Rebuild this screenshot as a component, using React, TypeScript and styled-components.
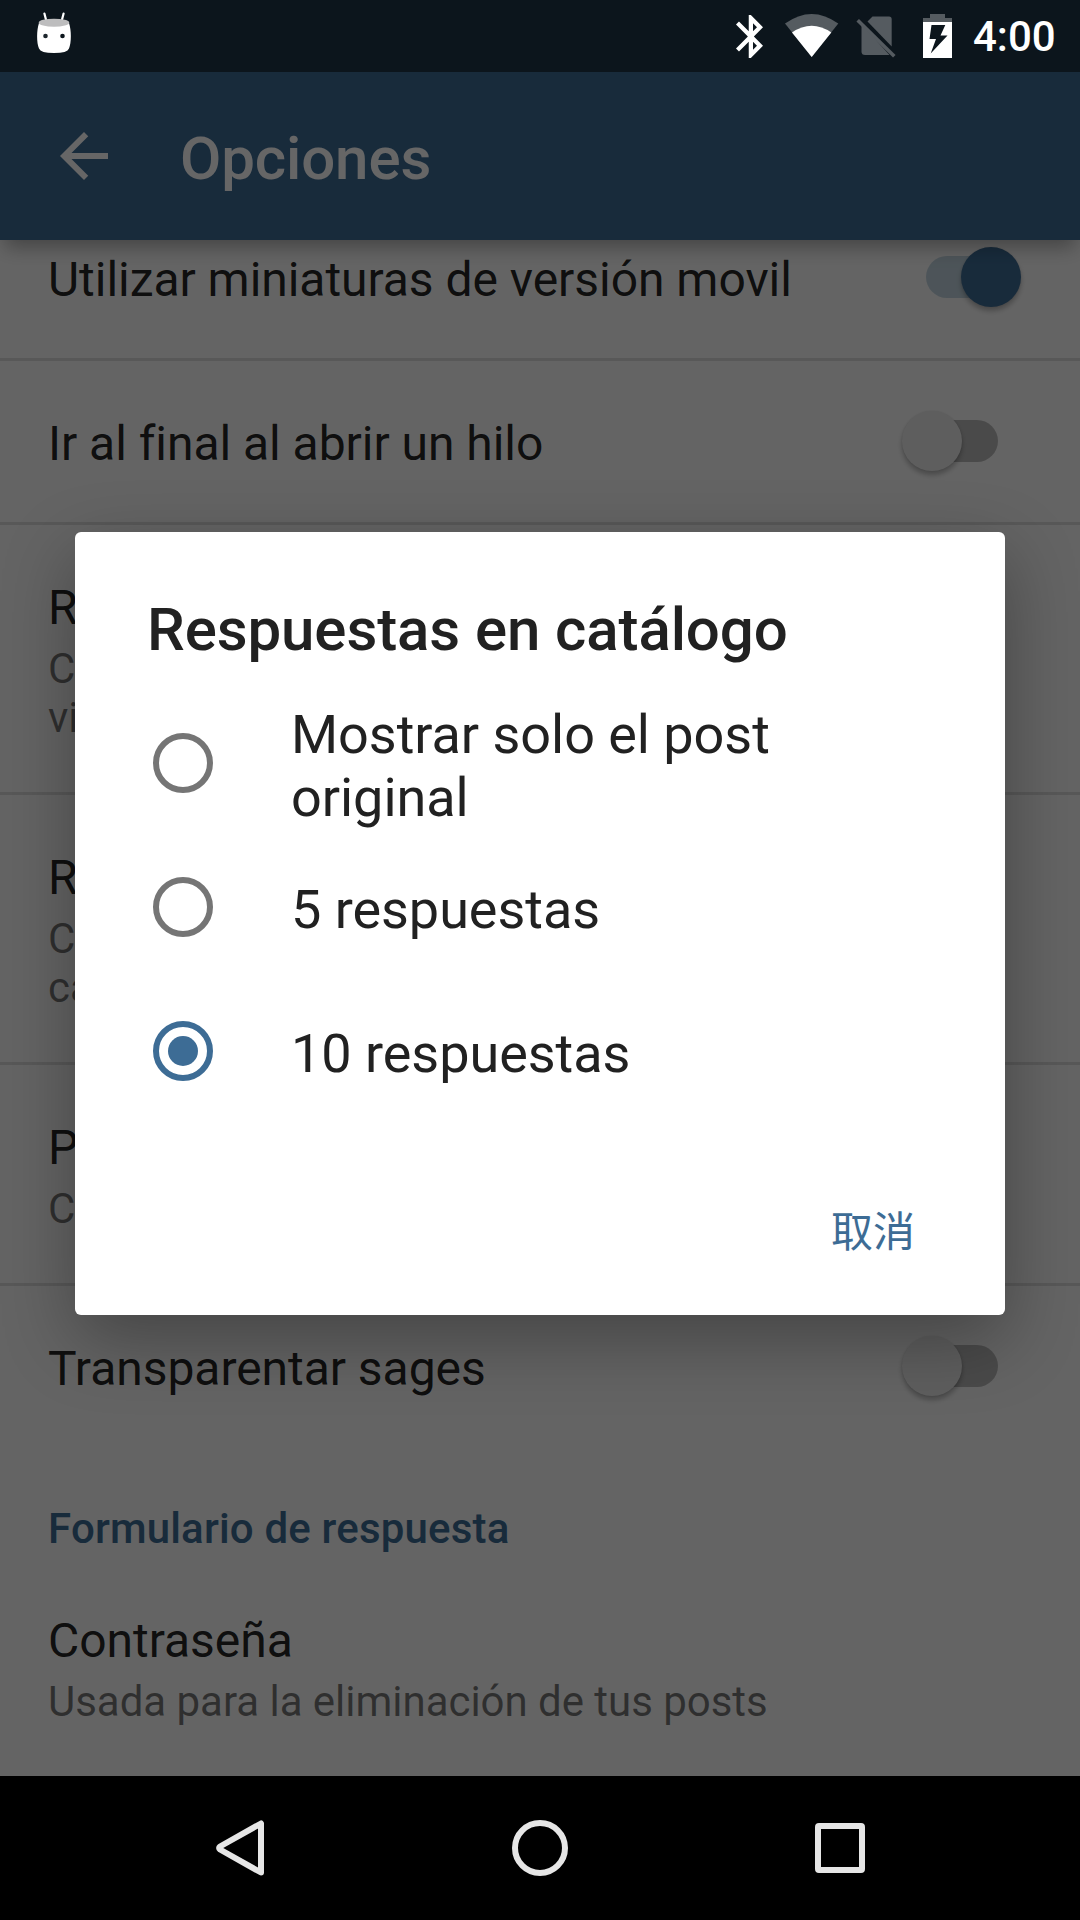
import React from "react";
import styled, { createGlobalStyle } from "styled-components";

const ACCENT = "#3d6c95";

const GlobalStyle = createGlobalStyle`
  *, *::before, *::after { box-sizing: border-box; }
  html, body { margin: 0; padding: 0; }
  body { font-family: Roboto, "Noto Sans CJK SC", sans-serif; background: #000; }
`;

const Screen = styled.div`
  position: relative;
  display: flex;
  flex-direction: column;
  width: 1080px;
  height: 1920px;
  overflow: hidden;
  background: #000;
`;

const StatusBar = styled.header`
  display: flex;
  align-items: center;
  flex: 0 0 72px;
  padding: 0 24px 0 36px;
  background: #0c151c;
  color: #fff;
`;

const StatusIcons = styled.div`
  display: flex;
  align-items: center;
  margin-left: auto;
`;

const Glyph = styled.svg<{ $gap?: number }>`
  display: block;
  flex: none;
  margin-right: ${(p) => p.$gap ?? 0}px;
`;

const Clock = styled.span`
  width: 83px;
  font-size: 42px;
  font-weight: 500;
  line-height: 50px;
  padding-top: 2px;
`;

const Activity = styled.div`
  position: relative;
  display: flex;
  flex-direction: column;
  flex: 1;
  overflow: hidden;
  background: #fafafa;
`;

const Toolbar = styled.div`
  position: relative;
  z-index: 1;
  display: flex;
  align-items: center;
  flex: 0 0 168px;
  padding-left: 48px;
  gap: 60px;
  background: ${ACCENT};
  color: #fff;
  box-shadow: 0 12px 18px -5px rgba(0, 0, 0, 0.32);
`;

const ToolbarTitle = styled.h1`
  margin: 0;
  padding-top: 6px;
  font-size: 60px;
  font-weight: 500;
  line-height: 70px;
  letter-spacing: -0.12px;
`;

const PreferenceList = styled.main`
  display: flex;
  flex-direction: column;
  margin-top: -43px;
`;

const PreferenceRow = styled.div<{ $divided?: boolean }>`
  display: flex;
  align-items: center;
  justify-content: space-between;
  padding-right: 59px;
  border-bottom: ${(p) => (p.$divided ? "3px solid rgba(0, 0, 0, 0.12)" : "none")};
`;

const PreferenceText = styled.div`
  display: flex;
  flex-direction: column;
  gap: 8px;
  padding: 55px 0 50px 48px;
`;

const PreferenceTitle = styled.div`
  font-size: 48px;
  line-height: 56px;
  letter-spacing: -0.04px;
  color: rgba(0, 0, 0, 0.87);
`;

const PreferenceSummary = styled.div`
  font-size: 42px;
  line-height: 49px;
  letter-spacing: -0.03px;
  white-space: pre-line;
  color: rgba(0, 0, 0, 0.54);
`;

const Category = styled.h2`
  margin: 0;
  padding: 57px 48px 5px;
  font-size: 42px;
  font-weight: 500;
  line-height: 49px;
  letter-spacing: 0.18px;
  color: ${ACCENT};
`;

const SwitchBox = styled.div<{ $on: boolean }>`
  display: flex;
  align-items: center;
  justify-content: ${(p) => (p.$on ? "flex-end" : "flex-start")};
  width: 119px;
  height: 60px;
  margin-bottom: 1px;
`;

const Track = styled.div<{ $on: boolean }>`
  flex: none;
  width: 72px;
  height: 42px;
  border-radius: 21px;
  margin: ${(p) => (p.$on ? "0 -37px 0 0" : "0 0 0 -36px")};
  order: ${(p) => (p.$on ? 0 : 1)};
  background: ${(p) => (p.$on ? "rgba(61, 122, 160, 0.3)" : "rgba(0, 0, 0, 0.26)")};
`;

const Thumb = styled.div<{ $on: boolean }>`
  position: relative;
  flex: none;
  width: 60px;
  height: 60px;
  border-radius: 50%;
  background: ${(p) => (p.$on ? ACCENT : "#ececec")};
  box-shadow: 0 4px 5px rgba(0, 0, 0, 0.26), 0 0 2px rgba(0, 0, 0, 0.1);
`;

const Scrim = styled.div`
  position: absolute;
  z-index: 2;
  inset: 0;
  display: flex;
  justify-content: center;
  align-items: flex-start;
  padding-top: 460px;
  background: rgba(0, 0, 0, 0.6);
`;

const Dialog = styled.section`
  display: flex;
  flex-direction: column;
  width: 930px;
  height: 783px;
  border-radius: 6px;
  background: #fff;
  box-shadow: 0 24px 72px rgba(0, 0, 0, 0.32);
`;

const DialogTitle = styled.h2`
  margin: 0;
  padding: 63px 72px 26px;
  font-size: 60px;
  font-weight: 500;
  line-height: 70px;
  letter-spacing: -0.1px;
  color: #212121;
`;

const Option = styled.label`
  display: flex;
  align-items: center;
  min-height: 144px;
  padding: 0 72px 0 78px;
  gap: 78px;
`;

const Radio = styled.span<{ $checked: boolean }>`
  display: flex;
  align-items: center;
  justify-content: center;
  flex: none;
  width: 60px;
  height: 60px;
  border: 6px solid ${(p) => (p.$checked ? ACCENT : "#757575")};
  border-radius: 50%;

  &::after {
    content: "";
    width: 30px;
    height: 30px;
    border-radius: 50%;
    background: ${(p) => (p.$checked ? ACCENT : "transparent")};
  }
`;

const OptionLabel = styled.span`
  padding-top: 5px;
  font-size: 54px;
  line-height: 63px;
  letter-spacing: -0.04px;
  color: #212121;
`;

const DialogActions = styled.div`
  display: flex;
  justify-content: flex-end;
  margin-top: auto;
  padding: 0 90px 56px;
`;

const DialogButton = styled.button`
  padding: 0;
  border: 0;
  background: none;
  font-family: "Noto Sans CJK SC", sans-serif;
  font-size: 42px;
  line-height: 60px;
  color: ${ACCENT};
`;

const NavigationBar = styled.nav`
  display: grid;
  grid-template-columns: repeat(3, 300px);
  justify-content: center;
  align-items: center;
  justify-items: center;
  flex: 0 0 144px;
  background: #000;
`;

function Switch({ on = false }: { on?: boolean }) {
  return (
    <SwitchBox $on={on}>
      <Track $on={on} />
      <Thumb $on={on} />
    </SwitchBox>
  );
}

type PreferenceProps = {
  title: string;
  summary?: string;
  toggle?: boolean;
  divided?: boolean;
};

function Preference({ title, summary, toggle, divided }: PreferenceProps) {
  return (
    <PreferenceRow $divided={divided}>
      <PreferenceText>
        <PreferenceTitle>{title}</PreferenceTitle>
        {summary && <PreferenceSummary>{summary}</PreferenceSummary>}
      </PreferenceText>
      {toggle !== undefined && <Switch on={toggle} />}
    </PreferenceRow>
  );
}

const options = ["Mostrar solo el post original", "5 respuestas", "10 respuestas"];
const selected = 2;

export default function App() {
  return (
    <Screen>
      <GlobalStyle />
      <StatusBar>
        <Glyph width="36" height="72" viewBox="36 0 36 72">
          <path d="M44.4 13.5 46.6 22M63.6 13.5 61.4 22" stroke="#fff" strokeWidth="2.2" strokeLinecap="round" />
          <path d="M39 23C36.5 30 36.5 43 39 48.500Q40.500 53 54 53T69 48.500C71.500 43 71.500 30 69 23Z" fill="#fff" />
          <ellipse cx="54" cy="22.700" rx="15.300" ry="4" fill="#bdbdbe" />
          <circle cx="45.500" cy="36" r="2.300" fill="#1d262d" />
          <circle cx="62.500" cy="36" r="2.300" fill="#0c151c" />
        </Glyph>
        <StatusIcons>
          <Glyph $gap={22} width="27" height="43" viewBox="5 2 12.71 20" preserveAspectRatio="none">
            <path
              fill="#fff"
              d="M17.71 7.71 12 2h-1v7.590L6.410 5 5 6.410 10.590 12 5 17.590 6.410 19 11 14.410V22h1l5.710-5.710-4.300-4.290 4.300-4.290zM13 5.830l1.880 1.880L13 9.590V5.830zm1.880 10.460L13 18.170v-3.760l1.880 1.880z"
            />
          </Glyph>
          <Glyph $gap={17} width="54" height="72" viewBox="85 0 54 72">
            <path d="M111.700 57 85 23.600Q111.700 4.400 138.300 23.600Z" fill="#555b60" />
            <path d="M111.700 57 92 32.400Q111.700 19 131.300 32.400Z" fill="#fff" />
          </Glyph>
          <Glyph $gap={27} width="40" height="72" viewBox="156 0 40 72">
            <path d="M167.500 21.500 172.500 16.500H189Q191.700 16.500 191.700 19.200V46.500Z" fill="#555b60" />
            <path d="M161.500 24V51.500Q161.500 55 165 55H189.500Z" fill="#555b60" />
            <path d="M157.700 20.200 194.300 56.300" stroke="#555b60" strokeWidth="3.600" />
          </Glyph>
          <Glyph $gap={21} width="29" height="72" viewBox="223 0 29 72">
            <path d="M223 22V18H230V14H245V18H252V22Z" fill="#555b60" />
            <path
              fillRule="evenodd"
              fill="#fff"
              d="M223 22H252V58H223ZM231.500 25 229.500 39H236L230.700 53.500 247.500 35.500H240.500L245.300 25Z"
            />
          </Glyph>
          <Clock>4:00</Clock>
        </StatusIcons>
      </StatusBar>

      <Activity>
        <Toolbar>
          <Glyph width="72" height="72" viewBox="0 0 24 24">
            <path fill="#fff" d="M20 11H7.830l5.590-5.590L12 4l-8 8 8 8 1.410-1.410L7.830 13H20v-2z" />
          </Glyph>
          <ToolbarTitle>Opciones</ToolbarTitle>
        </Toolbar>

        <PreferenceList>
          <Preference title="Utilizar miniaturas de versión movil" toggle divided />
          <Preference title="Ir al final al abrir un hilo" toggle={false} divided />
          <Preference title="R" summary={"C\nvi"} divided />
          <Preference title="R" summary={"C\nca"} divided />
          <Preference title="P" summary="C" divided />
          <Preference title="Transparentar sages" toggle={false} />
          <Category>Formulario de respuesta</Category>
          <Preference title="Contraseña" summary="Usada para la eliminación de tus posts" />
        </PreferenceList>

        <Scrim>
          <Dialog role="dialog">
            <DialogTitle>Respuestas en catálogo</DialogTitle>
            {options.map((label, index) => (
              <Option key={label}>
                <Radio $checked={index === selected} />
                <OptionLabel>{label}</OptionLabel>
              </Option>
            ))}
            <DialogActions>
              <DialogButton>取消</DialogButton>
            </DialogActions>
          </Dialog>
        </Scrim>
      </Activity>

      <NavigationBar>
        <Glyph width="48" height="56" viewBox="0 0 48 56">
          <path d="M45 3.500V52.500L4 29.500Q2.200 28 4 26.500Z" fill="none" stroke="#e6e6e6" strokeWidth="6" strokeLinejoin="round" />
        </Glyph>
        <Glyph width="56" height="56" viewBox="0 0 56 56">
          <circle cx="28" cy="28" r="25" fill="none" stroke="#e6e6e6" strokeWidth="6" />
        </Glyph>
        <Glyph width="50" height="50" viewBox="0 0 50 50">
          <rect x="3" y="3" width="44" height="44" rx="1" fill="none" stroke="#e6e6e6" strokeWidth="6" />
        </Glyph>
      </NavigationBar>
    </Screen>
  );
}
